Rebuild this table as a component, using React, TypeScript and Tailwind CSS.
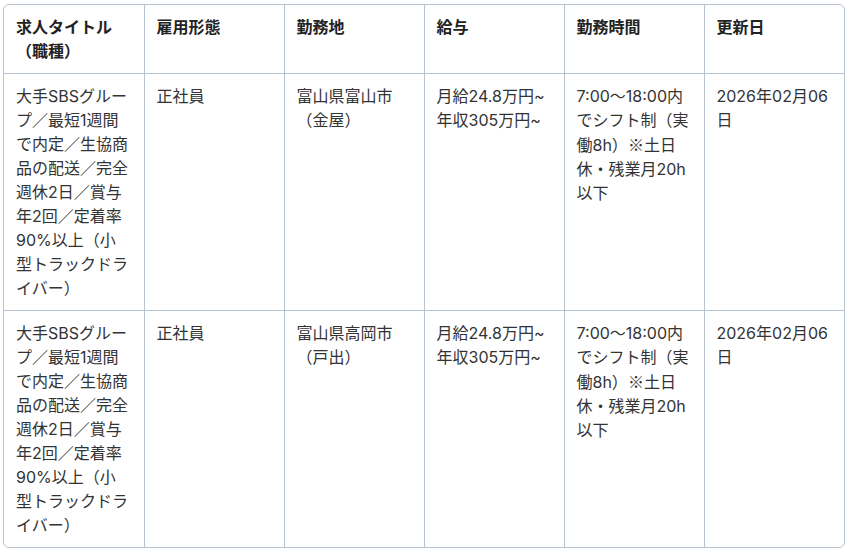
import React from 'react';

interface JobRow {
  title: string;
  employment: string;
  location: string;
  salary: string[];
  hours: React.ReactNode;
  updated: string;
}

const headers = ['求人タイトル（職種）', '雇用形態', '勤務地', '給与', '勤務時間', '更新日'];

// ※ falls to Inter otherwise, which draws it too small
const hours = (
  <>
    7:00～18:00内でシフト制（実働8h）
    <span className="font-['Noto_Sans_CJK_JP']">※</span>
    土日休・残業月20h以下
  </>
);

const title =
  '大手SBSグループ／最短1週間で内定／生協商品の配送／完全週休2日／賞与年2回／定着率90%以上（小型トラックドライバー）';

const rows: JobRow[] = [
  {
    title,
    employment: '正社員',
    location: '富山県富山市（金屋）',
    salary: ['月給24.8万円~', '年収305万円~'],
    hours,
    updated: '2026年02月06日',
  },
  {
    title,
    employment: '正社員',
    location: '富山県高岡市（戸出）',
    salary: ['月給24.8万円~', '年収305万円~'],
    hours,
    updated: '2026年02月06日',
  },
];

const cell = 'border-[#b7c4d0] px-3 py-2.5 align-top text-left';

const App: React.FC = () => {
  return (
    <div
      lang="ja"
      className="bg-white w-[848px] h-[552px] pt-1 pl-[3px] [text-spacing-trim:space-all]"
      style={{ fontFamily: 'Inter, "Noto Sans CJK JP", sans-serif' }}
    >
      <div className="w-[842px] border border-[#b7c4d0] rounded-md overflow-hidden">
        <table className="w-full table-fixed border-collapse text-[16px] leading-6">
          <colgroup>
            <col className="w-[140px]" />
            <col className="w-[140px]" />
            <col className="w-[140px]" />
            <col className="w-[140px]" />
            <col className="w-[140px]" />
            <col />
          </colgroup>
          <thead>
            <tr>
              {headers.map((h, i) => (
                <th
                  key={h}
                  className={`${cell} font-bold text-[#222] border-b ${i < headers.length - 1 ? 'border-r' : ''}`}
                >
                  {h}
                </th>
              ))}
            </tr>
          </thead>
          <tbody className="text-[#333]">
            {rows.map((r, idx) => {
              const last = idx === rows.length - 1;
              const rowCell = `${cell} font-normal ${last ? '' : 'border-b'}`;
              return (
                <tr key={idx}>
                  <td className={`${rowCell} border-r`}>{r.title}</td>
                  <td className={`${rowCell} border-r`}>{r.employment}</td>
                  <td className={`${rowCell} border-r`}>{r.location}</td>
                  <td className={`${rowCell} border-r`}>
                    {r.salary.map((s) => (
                      <div key={s}>{s}</div>
                    ))}
                  </td>
                  <td className={`${rowCell} border-r`}>{r.hours}</td>
                  <td className={rowCell}>{r.updated}</td>
                </tr>
              );
            })}
          </tbody>
        </table>
      </div>
    </div>
  );
};

export default App;
